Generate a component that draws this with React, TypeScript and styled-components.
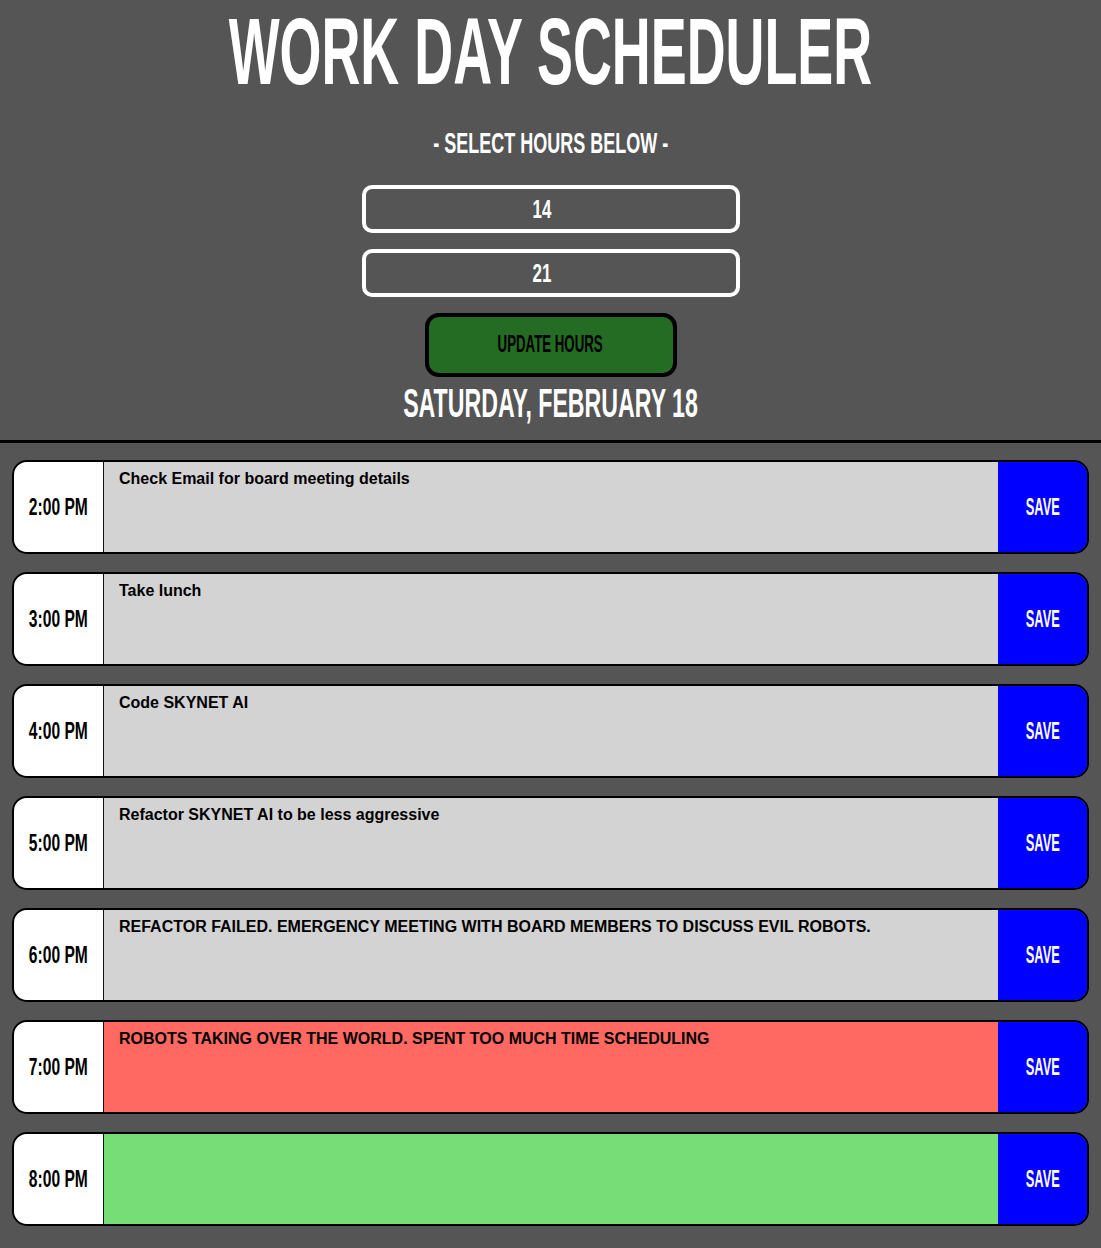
import React from "react";
import styled, { createGlobalStyle } from "styled-components";

const Global = createGlobalStyle`
  html, body {
    margin: 0;
    padding: 0;
    background: #555555;
  }
  body {
    font-family: "Liberation Sans", Arial, sans-serif;
  }
  * { box-sizing: border-box; }
`;

const Page = styled.div`
  display: flex;
  flex-direction: column;
  min-height: 1248px;
  background: #555555;
`;

const Header = styled.header`
  display: flex;
  flex-direction: column;
  align-items: center;
  padding: 5px 0 17px;
  border-bottom: 3px solid #000;
`;

const Cond = styled.span<{ $sx: number }>`
  display: inline-block;
  white-space: nowrap;
  transform: scaleX(${(p) => p.$sx});
  transform-origin: center;
`;

const Title = styled.h1`
  margin: 0;
  font-family: "Liberation Sans", Arial, sans-serif;
  font-weight: 700;
  font-size: 94px;
  line-height: 94px;
  height: 94px;
  color: #ffffff;
  text-align: center;
`;

const Subtitle = styled.h2`
  margin: 29px 0 0;
  font-weight: 700;
  font-size: 30px;
  line-height: 30px;
  color: #ffffff;
  text-align: center;
`;

const HourPicker = styled.div`
  display: flex;
  flex-direction: column;
  align-items: center;
  gap: 16px;
  margin-top: 27px;
`;

const HourBox = styled.div`
  width: 378px;
  height: 48px;
  border: 4px solid #ffffff;
  border-radius: 10px;
  display: flex;
  align-items: center;
  justify-content: center;
  padding-right: 17px;
  color: #ffffff;
  font-weight: 700;
  font-size: 25px;
  line-height: 40px;
`;

const UpdateButton = styled.button`
  width: 252px;
  height: 64px;
  border: 4px solid #000000;
  border-radius: 14px;
  background: #246b24;
  color: #000000;
  font-family: "Liberation Sans", Arial, sans-serif;
  font-weight: 700;
  font-size: 24px;
  line-height: 56px;
  padding: 0 0 2px;
  display: flex;
  align-items: center;
  justify-content: center;
  cursor: pointer;
`;

const DateLine = styled.h3`
  margin: 6px 0 0;
  font-weight: 700;
  font-size: 40px;
  line-height: 40px;
  height: 40px;
  color: #ffffff;
  text-align: center;
`;

const Schedule = styled.main`
  display: flex;
  flex-direction: column;
  gap: 18px;
  padding: 17px 12px 21px 12px;
`;

const Row = styled.div`
  display: flex;
  height: 94px;
  border: 2px solid #000000;
  border-radius: 15px;
  overflow: hidden;
`;

const HourLabel = styled.div`
  width: 89px;
  flex: 0 0 89px;
  background: #ffffff;
  display: flex;
  align-items: center;
  justify-content: center;
  color: #000000;
  font-weight: 700;
  font-size: 24px;
`;

const Entry = styled.textarea<{ $tone: string }>`
  flex: 1 1 auto;
  height: 100%;
  margin: 0;
  resize: none;
  border: none;
  border-left: 1px solid #111111;
  outline: none;
  padding: 8px 15px;
  background: ${(p) => p.$tone};
  color: #000000;
  font-family: "Liberation Sans", Arial, sans-serif;
  font-weight: 700;
  font-size: 16px;
  line-height: normal;
  overflow: hidden;
`;

const SaveButton = styled.button`
  width: 89px;
  flex: 0 0 89px;
  border: none;
  padding: 0;
  background: #0000ff;
  color: #ffffff;
  font-family: "Liberation Sans", Arial, sans-serif;
  font-weight: 700;
  font-size: 24px;
  display: flex;
  align-items: center;
  justify-content: center;
  cursor: pointer;
`;

const tones = {
  past: "#d3d3d3",
  present: "#ff6961",
  future: "#77dd77",
};

const rows: { hour: string; text: string; tone: keyof typeof tones }[] = [
  { hour: "2:00 PM", text: "Check Email for board meeting details", tone: "past" },
  { hour: "3:00 PM", text: "Take lunch", tone: "past" },
  { hour: "4:00 PM", text: "Code SKYNET AI", tone: "past" },
  { hour: "5:00 PM", text: "Refactor SKYNET AI to be less aggressive", tone: "past" },
  {
    hour: "6:00 PM",
    text: "REFACTOR FAILED. EMERGENCY MEETING WITH BOARD MEMBERS TO DISCUSS EVIL ROBOTS.",
    tone: "past",
  },
  {
    hour: "7:00 PM",
    text: "ROBOTS TAKING OVER THE WORLD. SPENT TOO MUCH TIME SCHEDULING",
    tone: "present",
  },
  { hour: "8:00 PM", text: "", tone: "future" },
];

export default function App() {
  return (
    <Page>
      <Global />
      <Header>
        <Title>
          <Cond $sx={0.573}>WORK DAY SCHEDULER</Cond>
        </Title>
        <Subtitle>
          <Cond $sx={0.6}>- SELECT HOURS BELOW -</Cond>
        </Subtitle>
        <HourPicker>
          <HourBox>
            <Cond $sx={0.68}>14</Cond>
          </HourBox>
          <HourBox>
            <Cond $sx={0.68}>21</Cond>
          </HourBox>
          <UpdateButton>
            <Cond $sx={0.552}>UPDATE HOURS</Cond>
          </UpdateButton>
        </HourPicker>
        <DateLine>
          <Cond $sx={0.579}>SATURDAY, FEBRUARY 18</Cond>
        </DateLine>
      </Header>
      <Schedule>
        {rows.map((r) => (
          <Row key={r.hour}>
            <HourLabel>
              <Cond $sx={0.65}>{r.hour}</Cond>
            </HourLabel>
            <Entry $tone={tones[r.tone]} defaultValue={r.text} readOnly />
            <SaveButton>
              <Cond $sx={0.535}>SAVE</Cond>
            </SaveButton>
          </Row>
        ))}
      </Schedule>
    </Page>
  );
}
